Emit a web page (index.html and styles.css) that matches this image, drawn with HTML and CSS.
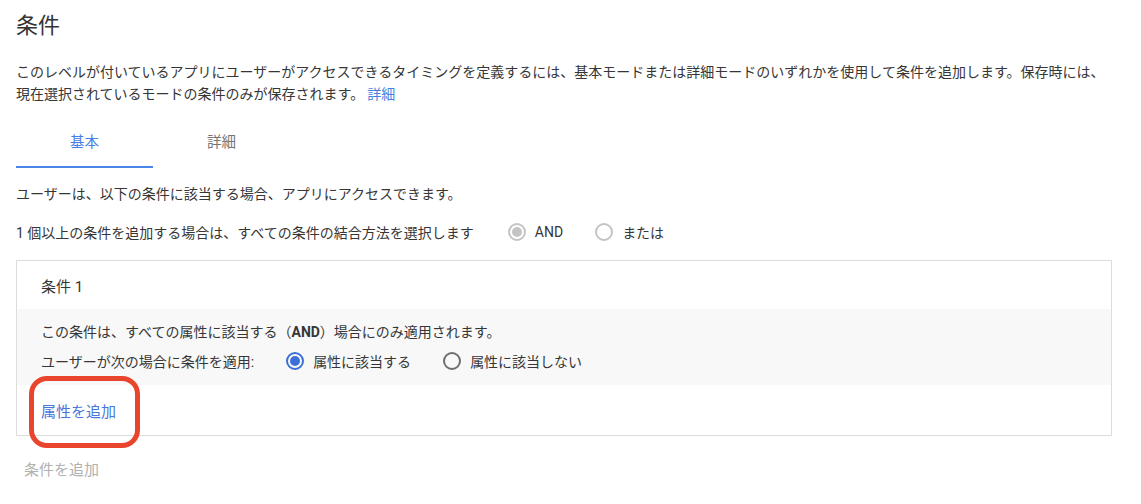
FILE: index.html
```html
<!DOCTYPE html>
<html lang="ja">
<head>
<meta charset="utf-8">
<link rel="stylesheet" href="styles.css">
</head>
<body>
<div class="page">
  <h1 class="title">条件</h1>
  <p class="intro">このレベルが付いているアプリにユーザーがアクセスできるタイミングを定義するには、基本モードまたは詳細モードのいずれかを使用して条件を追加します。保存時には、現在選択されているモードの条件のみが保存されます。<a class="link more">詳細</a></p>

  <div class="tabs">
    <div class="tab active">基本</div>
    <div class="tab">詳細</div>
  </div>

  <p class="line">ユーザーは、以下の条件に該当する場合、アプリにアクセスできます。</p>

  <div class="row join-row">
    <span class="row-label">1 個以上の条件を追加する場合は、すべての条件の結合方法を選択します</span>
    <label class="radio"><span class="dot disabled checked"></span><span>AND</span></label>
    <label class="radio"><span class="dot disabled"></span><span>または</span></label>
  </div>

  <div class="card">
    <div class="card-head">条件 1</div>
    <div class="card-body">
      <p class="body-line">この条件は、すべての属性に該当する（<b>AND</b>）場合にのみ適用されます。</p>
      <div class="row apply-row">
        <span class="row-label">ユーザーが次の場合に条件を適用:</span>
        <label class="radio"><span class="dot blue checked"></span><span>属性に該当する</span></label>
        <label class="radio"><span class="dot dark"></span><span>属性に該当しない</span></label>
      </div>
    </div>
    <div class="card-foot"><a class="link add-attr">属性を追加</a></div>
    <div class="highlight"></div>
  </div>

  <button class="add-cond">条件を追加</button>
</div>
</body>
</html>
```
FILE: styles.css
```css
html, body {
  margin: 0;
  padding: 0;
  background: #ffffff;
}
body {
  font-family: Roboto, "Noto Sans CJK JP", sans-serif;
  color: #363636;
  font-size: 14px;
}
.page {
  width: 1096px;
  padding: 12px 16px;
}
.title {
  margin: 0;
  font-size: 22px;
  line-height: 28px;
  font-weight: 400;
  color: #333333;
}
.intro {
  margin: 21px 0 0;
  line-height: 22px;
}
.link {
  color: #4a7fe0;
  text-decoration: none;
}
.more {
  margin-left: 3px;
}
.tabs {
  display: flex;
  margin-top: 16px;
}
.tab {
  width: 137px;
  text-align: center;
  padding: 12px 0 13px;
  line-height: 20px;
  font-size: 14.5px;
  color: #757575;
  border-bottom: 2px solid transparent;
}
.tab.active {
  color: #4a80e4;
  border-bottom-color: #4a86e8;
}
.line {
  margin: 16px 0 0;
  line-height: 20px;
}
.row {
  display: flex;
  align-items: center;
}
.join-row {
  margin-top: 16px;
  height: 24px;
}
.join-row .row-label {
  margin-right: 34px;
}
.radio {
  display: flex;
  align-items: center;
  gap: 9px;
  margin-right: 32px;
}
.dot {
  box-sizing: border-box;
  width: 18px;
  height: 18px;
  border-radius: 50%;
  border: 2px solid #c4c4c4;
  display: flex;
  align-items: center;
  justify-content: center;
}
.dot.checked::after {
  content: "";
  width: 10px;
  height: 10px;
  border-radius: 50%;
  background: #c4c4c4;
}
.dot.blue {
  border-color: #3d6fd9;
}
.dot.blue::after {
  background: #3d6fd9;
}
.dot.dark {
  border-color: #6f6f6f;
}
.card {
  position: relative;
  margin-top: 16px;
  border: 1px solid #dcdcdc;
}
.card-head {
  height: 48px;
  display: flex;
  align-items: center;
  padding: 0 24px;
  font-size: 15px;
}
.card-body {
  background: #f8f8f8;
  padding: 13px 24px 14px;
}
.body-line {
  margin: 0;
  line-height: 20px;
}
.body-line b {
  font-weight: 700;
}
.apply-row {
  margin-top: 9px;
  height: 20px;
}
.apply-row .row-label {
  margin-right: 32px;
}
.card-foot {
  height: 50px;
  display: flex;
  align-items: center;
  padding: 0 24px;
}
.add-attr {
  color: #4876dc;
  font-size: 15px;
}
.highlight {
  position: absolute;
  left: 12px;
  top: 115px;
  width: 111px;
  height: 72px;
  box-sizing: border-box;
  border: 5px solid #e8452c;
  border-radius: 18px;
}
.add-cond {
  margin-top: 16px;
  border: none;
  background: none;
  padding: 8px;
  font: inherit;
  font-size: 15px;
  line-height: 20px;
  color: #b0b0b0;
}
```
